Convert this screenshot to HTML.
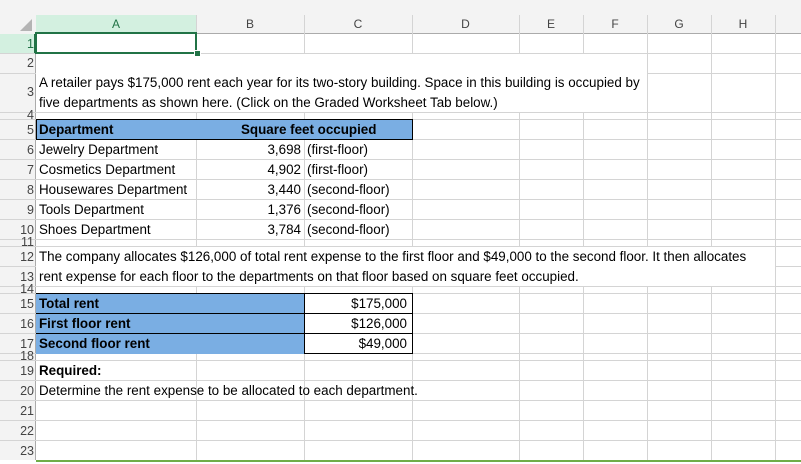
<!DOCTYPE html>
<html><head><meta charset="utf-8"><style>
body{margin:0;width:801px;height:464px;overflow:hidden;background:#fff;position:relative;font-family:"Liberation Sans",sans-serif}
.a{position:absolute}
.h{position:absolute;background:#d4d4d4;height:1px}
.v{position:absolute;background:#d4d4d4;width:1px}
.t{position:absolute;font-size:13.4px;color:#000;white-space:nowrap;line-height:20px}
.ch{position:absolute;top:15px;height:18px;font-size:12px;color:#444;text-align:center;line-height:19px}
.rh{position:absolute;left:0;width:34px;text-align:right;font-size:12.5px;color:#444}
b{font-weight:bold}
</style></head><body>
<div class="a" style="left:0;top:0;width:801px;height:15px;background:#f3f3f3"></div>
<div class="a" style="left:0;top:15px;width:801px;height:18px;background:#f3f3f3;border-bottom:1px solid #ababab"></div>
<div class="a" style="left:0;top:33px;width:35px;height:431px;background:#f3f3f3;border-right:1px solid #ababab"></div>
<div class="a" style="left:36px;top:15px;width:160px;height:17px;background:#d3f0e0;border-bottom:2px solid #217346"></div>
<div class="a" style="left:0;top:34px;width:34px;height:19px;background:#d3f0e0;border-right:2px solid #217346"></div>
<svg class="a" style="left:20px;top:19px" width="13" height="13"><polygon points="12,0 12,12 0,12" fill="#b4b4b4"/></svg>
<div id="g"></div>
<div class="ch" style="left:36px;width:160px;color:#217346">A</div>
<div class="ch" style="left:196px;width:108px">B</div>
<div class="ch" style="left:304px;width:108px">C</div>
<div class="ch" style="left:412px;width:107px">D</div>
<div class="ch" style="left:519px;width:64px">E</div>
<div class="ch" style="left:583px;width:64px">F</div>
<div class="ch" style="left:647px;width:64px">G</div>
<div class="ch" style="left:711px;width:64px">H</div>
<div class="a" style="left:36px;top:54px;width:611px;height:58px;background:#fff"></div>
<div class="a" style="left:36px;top:247px;width:739px;height:39px;background:#fff"></div>
<div class="a" style="left:35px;top:32px;width:158px;height:18px;border:2px solid #217346"></div>
<div class="a" style="left:194px;top:50px;width:5px;height:5px;background:#217346;border:1px solid #fff"></div>
<div class="a" style="left:36px;top:119px;width:375px;height:19px;background:#7aaee3;border:1px solid #000"></div>
<div class="a" style="left:36px;top:293px;width:268px;height:60px;background:#7aaee3;border-top:1px solid #000"></div>
<div class="a" style="left:304px;top:293px;width:107px;height:59px;border:1px solid #000;background:#fff"></div>
<div class="a" style="left:36px;top:313px;width:376px;height:1px;background:#000"></div>
<div class="a" style="left:36px;top:333px;width:376px;height:1px;background:#000"></div>
<div class="a" style="left:0;top:460px;width:801px;height:4px;background:#fff"></div>
<div class="a" style="left:36px;top:460px;width:765px;height:2px;background:#70ad47"></div>
<div class="rh" style="top:33px;line-height:22px;color:#217346">1</div>
<div class="rh" style="top:53px;line-height:20px">2</div>
<div class="rh" style="top:73px;line-height:39px">3</div>
<div class="rh" style="top:110px;line-height:10px;height:9px;overflow:hidden">4</div>
<div class="rh" style="top:119px;line-height:22px">5</div>
<div class="rh" style="top:139px;line-height:22px">6</div>
<div class="rh" style="top:159px;line-height:22px">7</div>
<div class="rh" style="top:179px;line-height:22px">8</div>
<div class="rh" style="top:199px;line-height:22px">9</div>
<div class="rh" style="top:219px;line-height:22px">10</div>
<div class="rh" style="top:237px;line-height:10px;height:9px;overflow:hidden">11</div>
<div class="rh" style="top:246px;line-height:22px">12</div>
<div class="rh" style="top:266px;line-height:22px">13</div>
<div class="rh" style="top:284px;line-height:10px;height:9px;overflow:hidden">14</div>
<div class="rh" style="top:293px;line-height:22px">15</div>
<div class="rh" style="top:313px;line-height:22px">16</div>
<div class="rh" style="top:333px;line-height:22px">17</div>
<div class="rh" style="top:351px;line-height:10px;height:9px;overflow:hidden">18</div>
<div class="rh" style="top:360px;line-height:22px">19</div>
<div class="rh" style="top:380px;line-height:22px">20</div>
<div class="rh" style="top:400px;line-height:22px">21</div>
<div class="rh" style="top:420px;line-height:22px">22</div>
<div class="rh" style="top:440px;line-height:22px">23</div>
<div class="t" style="left:39px;top:73px">A retailer pays $175,000 rent each year for its two-story building. Space in this building is occupied by</div>
<div class="t" style="left:39px;top:93px">five departments as shown here. (Click on the Graded Worksheet Tab below.)</div>
<div class="t" style="left:39px;top:120px"><b>Department</b></div>
<div class="t" style="left:241px;top:120px"><b>Square feet occupied</b></div>
<div class="t" style="left:39px;top:140px">Jewelry Department</div>
<div class="t" style="left:39px;top:160px">Cosmetics Department</div>
<div class="t" style="left:39px;top:180px">Housewares Department</div>
<div class="t" style="left:39px;top:200px">Tools Department</div>
<div class="t" style="left:39px;top:220px">Shoes Department</div>
<div class="t" style="left:196px;width:105px;text-align:right;top:140px">3,698</div>
<div class="t" style="left:196px;width:105px;text-align:right;top:160px">4,902</div>
<div class="t" style="left:196px;width:105px;text-align:right;top:180px">3,440</div>
<div class="t" style="left:196px;width:105px;text-align:right;top:200px">1,376</div>
<div class="t" style="left:196px;width:105px;text-align:right;top:220px">3,784</div>
<div class="t" style="left:307px;top:140px">(first-floor)</div>
<div class="t" style="left:307px;top:160px">(first-floor)</div>
<div class="t" style="left:307px;top:180px">(second-floor)</div>
<div class="t" style="left:307px;top:200px">(second-floor)</div>
<div class="t" style="left:307px;top:220px">(second-floor)</div>
<div class="t" style="left:39px;top:247px">The company allocates $126,000 of total rent expense to the first floor and $49,000 to the second floor. It then allocates</div>
<div class="t" style="left:39px;top:267px">rent expense for each floor to the departments on that floor based on square feet occupied.</div>
<div class="t" style="left:39px;top:294px"><b>Total rent</b></div>
<div class="t" style="left:39px;top:314px"><b>First floor rent</b></div>
<div class="t" style="left:39px;top:334px"><b>Second floor rent</b></div>
<div class="t" style="left:304px;width:103px;text-align:right;top:294px">$175,000</div>
<div class="t" style="left:304px;width:103px;text-align:right;top:314px">$126,000</div>
<div class="t" style="left:304px;width:103px;text-align:right;top:334px">$49,000</div>
<div class="t" style="left:39px;top:361px"><b>Required:</b></div>
<div class="t" style="left:39px;top:381px">Determine the rent expense to be allocated to each department.</div>
<script>
var g=document.getElementById('g'),s='';
var rows=[53,73,112,119,139,159,179,199,219,239,246,266,286,293,313,333,353,360,380,400,420,440,460];
rows.forEach(function(y){s+='<div class="h" style="left:0;top:'+y+'px;width:801px"></div>';});
[196,304,412,519,583,647,711,775].forEach(function(x){s+='<div class="v" style="left:'+x+'px;top:15px;height:445px"></div>';});
g.innerHTML=s;
</script>
</body></html>
